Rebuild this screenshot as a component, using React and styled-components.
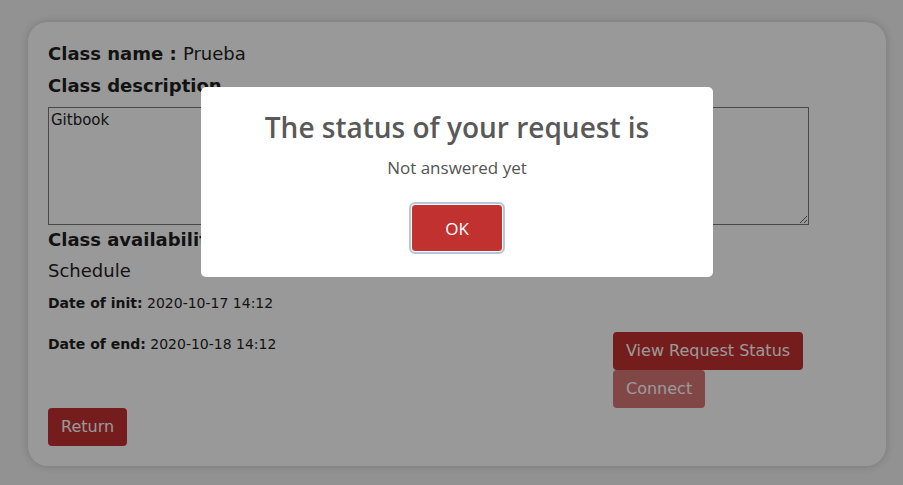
import React from 'react'
import styled, { createGlobalStyle } from 'styled-components'

const GlobalStyle = createGlobalStyle`
  html, body {
    margin: 0;
    padding: 0;
    background: #f4f4f4;
  }
  body {
    font-family: "DejaVu Sans", "Liberation Sans", sans-serif;
    color: #2b2b2b;
  }
`

const Page = styled.div`
  padding: 22px 17px 20px 28px;
  box-sizing: border-box;
  min-height: 485px;
`

const Card = styled.div`
  background: #ffffff;
  border-radius: 20px;
  box-shadow: 0 0 10px rgba(0, 0, 0, 0.18);
  padding: 20px;
  box-sizing: border-box;
  width: 858px;
`

const Heading = styled.div`
  font-size: 18px;
  line-height: 24px;
  font-weight: ${p => (p.$bold ? 600 : 400)};
  margin-bottom: ${p => p.$gap || 8}px;
  color: #1e1e1e;
`

const Light = styled.span`
  font-weight: 400;
`

const Description = styled.textarea`
  display: block;
  width: 761px;
  height: 118px;
  box-sizing: border-box;
  border: 1px solid #7a7a7a;
  background: #fff;
  font-family: "DejaVu Sans", sans-serif;
  font-size: 15px;
  line-height: 20px;
  color: #222;
  padding: 2px 2px;
  margin: 9px 0 3px;
  resize: vertical;
`

const Row = styled.div`
  display: grid;
  grid-template-columns: 565px auto;
  margin-top: 10px;
`

const Dates = styled.div`
  display: flex;
  flex-direction: column;
  gap: 21px;
`

const DateLine = styled.div`
  font-size: 14px;
  line-height: 20px;
  color: #1e1e1e;
  b {
    font-weight: 600;
  }
`

const Actions = styled.div`
  display: flex;
  flex-direction: column;
  align-items: flex-start;
  padding-top: 39px;
`

const Button = styled.button`
  font-family: "DejaVu Sans", sans-serif;
  font-size: 16px;
  line-height: 22px;
  padding: 8px 13px;
  border: none;
  border-radius: 4px;
  background: #c42f2f;
  color: #fff;
  opacity: ${p => (p.disabled ? 0.65 : 1)};
  cursor: pointer;
`

const Overlay = styled.div`
  position: fixed;
  inset: 0;
  background: rgba(0, 0, 0, 0.4);
`

const Modal = styled.div`
  position: fixed;
  left: 201px;
  top: 87px;
  width: 512px;
  height: 190px;
  background: #fff;
  border-radius: 5px;
  box-sizing: border-box;
  padding-top: 20px;
  display: flex;
  flex-direction: column;
  align-items: center;
  font-family: "Open Sans", "Noto Sans", sans-serif;
`

const ModalTitle = styled.div`
  font-size: 28px;
  line-height: 40px;
  font-weight: 600;
  color: #595959;
`

const ModalText = styled.div`
  font-size: 17px;
  line-height: 22px;
  color: #545454;
  margin-top: 10px;
`

const OkButton = styled.button`
  margin-top: 25px;
  width: 92px;
  height: 48px;
  box-sizing: border-box;
  border-radius: 4px;
  border: 1px solid #fff;
  outline: 2px solid #b8c7d8;
  outline-offset: 0;
  background: #c1312f;
  color: #fff;
  font-family: "Open Sans", "Noto Sans", sans-serif;
  font-size: 17px;
`

export default function App() {
  return (
    <>
      <GlobalStyle />
      <Page>
        <Card>
          <Heading $bold>
            Class name : <Light>Prueba</Light>
          </Heading>
          <Heading $bold $gap={0}>Class description</Heading>
          <Description defaultValue="Gitbook" />
          <Heading $bold $gap={7}>Class availability</Heading>
          <Heading $gap={0}>Schedule</Heading>
          <Row>
            <Dates>
              <DateLine>
                <b>Date of init:</b> 2020-10-17 14:12
              </DateLine>
              <DateLine>
                <b>Date of end:</b> 2020-10-18 14:12
              </DateLine>
            </Dates>
            <Actions>
              <Button>View Request Status</Button>
              <Button disabled>Connect</Button>
            </Actions>
          </Row>
          <Button>Return</Button>
        </Card>
      </Page>
      <Overlay />
      <Modal>
        <ModalTitle>The status of your request is</ModalTitle>
        <ModalText>Not answered yet</ModalText>
        <OkButton>OK</OkButton>
      </Modal>
    </>
  )
}
